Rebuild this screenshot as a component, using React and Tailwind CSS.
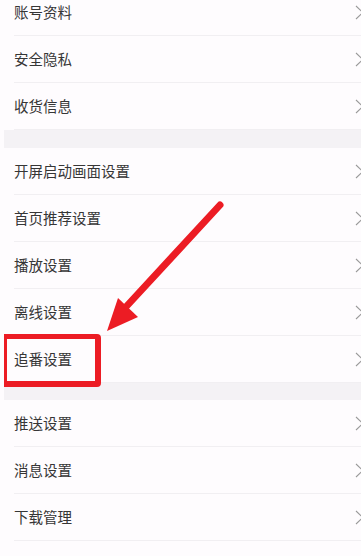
import React from "react";

const groups = [
  ["账号资料", "安全隐私", "收货信息"],
  ["开屏启动画面设置", "首页推荐设置", "播放设置", "离线设置", "追番设置"],
  ["推送设置", "消息设置", "下载管理"],
];

function Chevron() {
  return (
    <svg width="9" height="15" viewBox="0 0 9 15" className="ml-auto mr-[-3px] shrink-0">
      <path d="M1 1 L8 7.5 L1 14" fill="none" stroke="#9a9a9a" strokeWidth="1.1" />
    </svg>
  );
}

function Row({ label }) {
  return (
    <li className="h-[47px] flex items-center ml-[10px] border-b border-[#f1eff2]">
      <span className="text-[14.5px] text-[#363636] leading-none">{label}</span>
      <Chevron />
    </li>
  );
}

export default function App() {
  return (
    <main
      className="relative w-[361px] h-[556px] overflow-hidden bg-[#fefcfe] pl-[4px]"
      style={{ fontFamily: '"Noto Sans CJK SC", "Noto Sans", sans-serif' }}
    >
      <div className="mt-[-11px] flex flex-col">
        {groups.map((group, gi) => (
          <section key={gi}>
            {gi > 0 && <div className={gi === 1 ? "h-[18px] bg-[#f4f2f5]" : "h-[17px] bg-[#f4f2f5]"} />}
            <ul>
              {group.map((label) => (
                <Row key={label} label={label} />
              ))}
            </ul>
          </section>
        ))}
      </div>

      {/* highlight box */}
      <div className="absolute left-[4px] top-[334px] w-[97px] h-[53px] border-[#ec1c24] border-t-[5px] border-r-[6px] border-b-[6px] border-l-[3px] rounded-r-[4px]" />

      {/* arrow */}
      <svg className="absolute left-0 top-0" width="361" height="556" viewBox="0 0 361 556">
        <line x1="220" y1="205" x2="124" y2="309" stroke="#ec1c24" strokeWidth="7" strokeLinecap="round" />
        <polygon points="107,331 118,298 138,317" fill="#ec1c24" />
      </svg>
    </main>
  );
}
